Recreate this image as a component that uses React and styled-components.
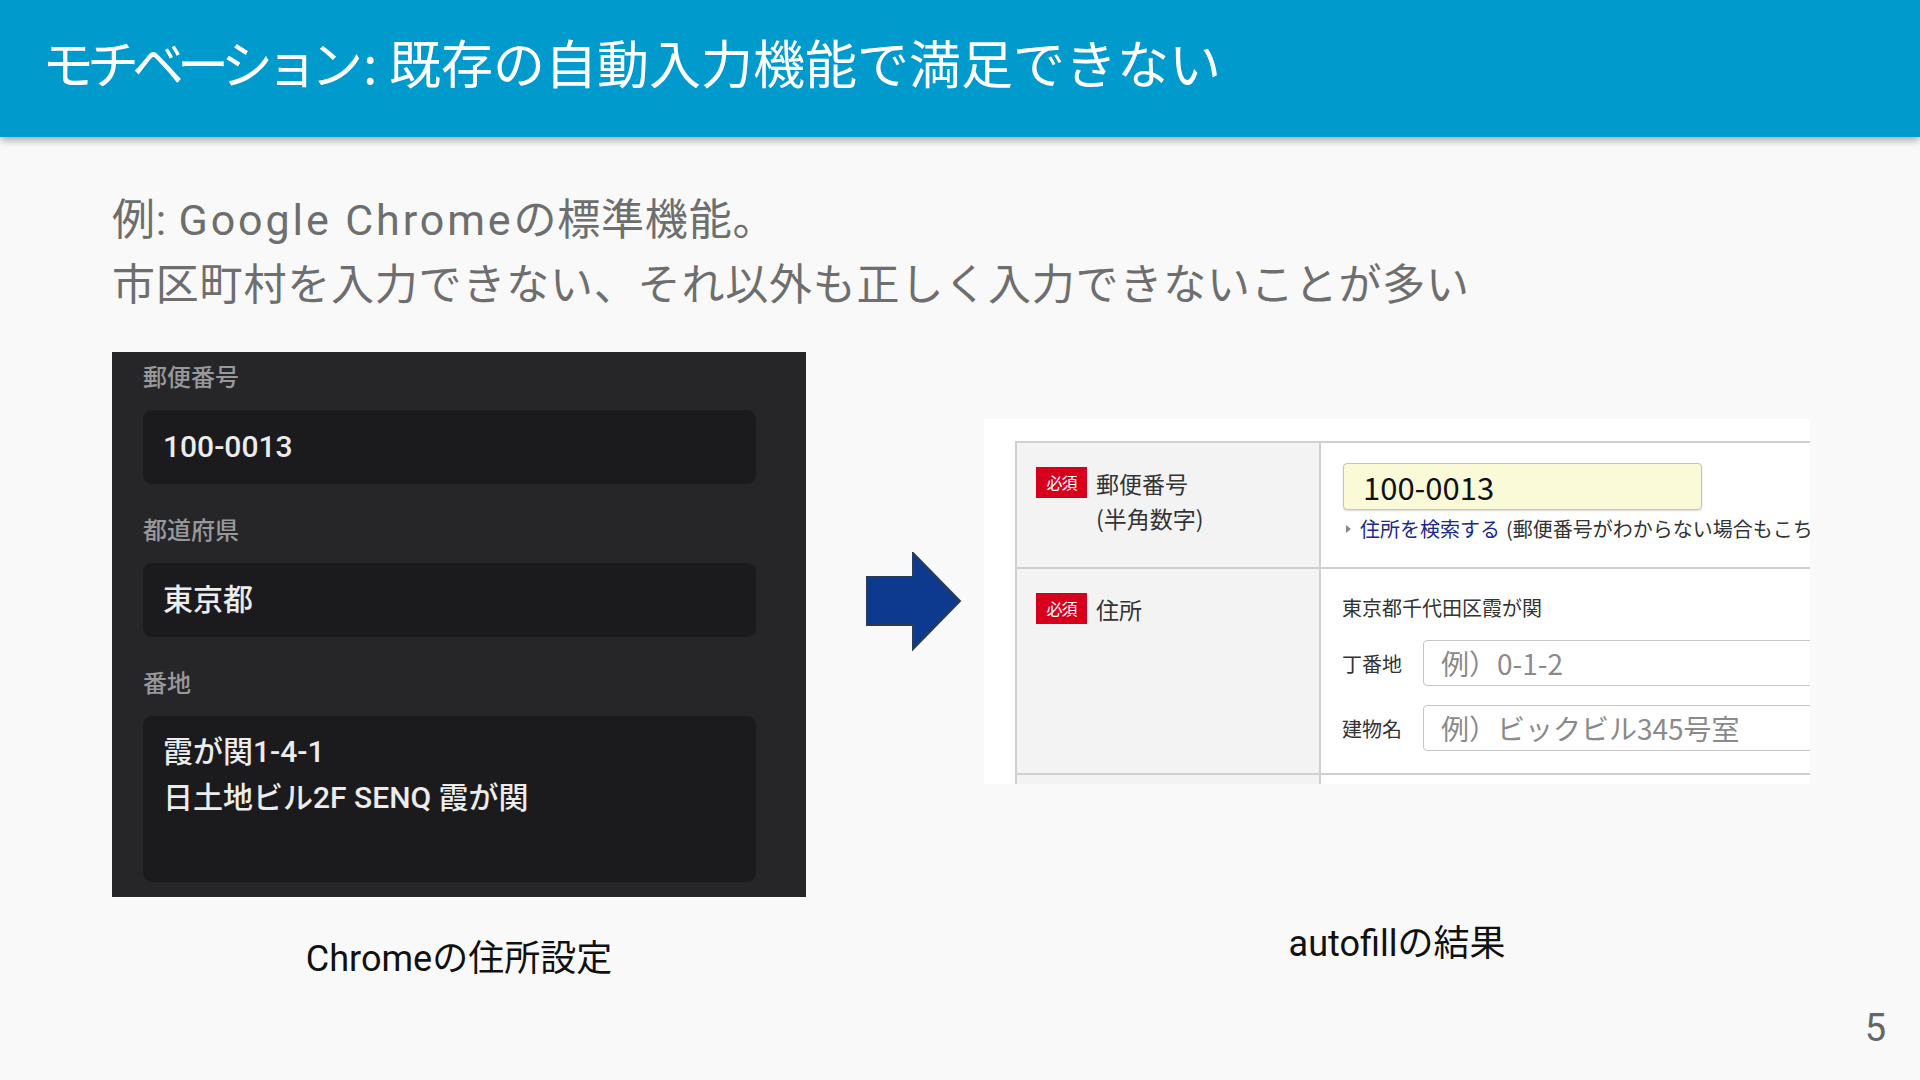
import React from "react";
import styled, { createGlobalStyle } from "styled-components";

const GlobalStyle = createGlobalStyle`
  html, body { margin: 0; padding: 0; }
  body {
    width: 1920px;
    height: 1080px;
    overflow: hidden;
    background: #f9f9f9;
    font-family: Roboto, "Noto Sans CJK JP", "Noto Sans", sans-serif;
  }
`;

const Slide = styled.div`
  position: relative;
  width: 1920px;
  height: 1080px;
  background: #f9f9f9;
  display: flex;
  flex-direction: column;
`;

const Header = styled.header`
  height: 137px;
  box-sizing: border-box;
  background: #009acd;
  box-shadow: 0 3px 8px rgba(0, 0, 0, 0.35);
  padding: 33px 0 0 42px;
  position: relative;
  z-index: 1;
`;

const Title = styled.h1`
  margin: 0;
  font-family: "Noto Sans CJK JP", sans-serif;
  font-weight: 400;
  font-size: 52px;
  line-height: 58px;
  color: #ffffff;
  white-space: nowrap;
`;

const Kana = styled.span`
  letter-spacing: -7px;
  margin-right: 7px;
`;

const Content = styled.main`
  padding: 0 0 0 112px;
  display: flex;
  flex-direction: column;
`;

const Lead = styled.div`
  margin-top: 51px;
  color: #6e6e6e;
  font-family: Roboto, "Noto Sans CJK JP", sans-serif;
  font-size: 43px;
  line-height: 65px;
  letter-spacing: 0.8px;
  white-space: nowrap;
`;

const LeadLatin = styled.span`
  letter-spacing: 2.9px;
`;

const Figures = styled.div`
  margin-top: 34px;
  display: flex;
  align-items: flex-start;
`;

const Figure = styled.figure`
  margin: ${(p) => p.$top || 0}px 0 0 0;
  display: flex;
  flex-direction: column;
  align-items: center;
`;

const Caption = styled.figcaption`
  margin-top: ${(p) => p.$gap}px;
  font-family: Roboto, "Noto Sans CJK JP", sans-serif;
  font-size: 36px;
  line-height: 36px;
  color: #111;
  white-space: nowrap;
`;

/* ---------- Chrome settings panel ---------- */
const DarkPanel = styled.div`
  width: 694px;
  height: 545px;
  box-sizing: border-box;
  background: #262628;
  padding: 12px 50px 0 31px;
  display: flex;
  flex-direction: column;
`;

const FieldGroup = styled.div`
  display: flex;
  flex-direction: column;
  & + & {
    margin-top: 33px;
  }
`;

const DarkLabel = styled.div`
  font-family: Roboto, "Noto Sans CJK JP", sans-serif;
  font-size: 24px;
  font-weight: 500;
  line-height: 28px;
  color: #98989b;
  margin-bottom: 18px;
`;

const DarkInput = styled.div`
  height: ${(p) => p.$h}px;
  box-sizing: border-box;
  background: #1b1b1d;
  border-radius: 9px;
  padding: ${(p) => (p.$multi ? "13px 20px" : "0 20px")};
  display: flex;
  flex-direction: column;
  justify-content: ${(p) => (p.$multi ? "flex-start" : "center")};
  font-family: Roboto, "Noto Sans CJK JP", sans-serif;
  font-size: 30px;
  font-weight: 500;
  line-height: 46px;
  color: #ececec;
  white-space: nowrap;
`;

/* ---------- Arrow ---------- */
const ArrowWrap = styled.div`
  margin: 200px 22px 0 60px;
  width: 96px;
  height: 100px;
`;

/* ---------- Web form screenshot ---------- */
const Shot = styled.div`
  width: 826px;
  height: 365px;
  box-sizing: border-box;
  background: #ffffff;
  overflow: hidden;
  padding: 22px 0 0 31px;
`;

const FormTable = styled.div`
  width: 900px;
  display: grid;
  grid-template-columns: 304px 1fr;
  border-top: 2px solid #cfcfcf;
  border-left: 2px solid #cfcfcf;
  font-family: "Noto Sans CJK JP", sans-serif;
  color: #333;
`;

const LabelCell = styled.div`
  background: #f3f3f3;
  border-right: 2px solid #cfcfcf;
  border-bottom: 2px solid #cfcfcf;
  height: ${(p) => p.$h}px;
  box-sizing: border-box;
  padding: 23px 0 0 19px;
  display: flex;
  align-items: flex-start;
  gap: 9px;
`;

const ValueCell = styled.div`
  border-bottom: 2px solid #cfcfcf;
  height: ${(p) => p.$h}px;
  box-sizing: border-box;
  padding: ${(p) => p.$pad};
  display: flex;
  flex-direction: column;
`;

const Badge = styled.span`
  flex: none;
  width: 51px;
  height: 31px;
  margin-top: 1px;
  background: #d7001c;
  color: #fff;
  font-size: 16px;
  line-height: 31px;
  text-align: center;
  letter-spacing: -1px;
`;

const LabelText = styled.div`
  font-size: 23px;
  line-height: 35px;
  color: #333;
`;

const ZipInput = styled.div`
  width: 359px;
  height: 47px;
  box-sizing: border-box;
  background: #fafad9;
  border: 1px solid #c3c3c3;
  border-radius: 4px;
  box-shadow: 0 1px 2px rgba(0, 0, 0, 0.15);
  padding-left: 19px;
  font-family: "Noto Sans CJK JP", sans-serif;
  font-size: 31px;
  line-height: 45px;
  color: #111;
`;

const HelpLine = styled.div`
  margin-top: 5px;
  font-size: 20px;
  line-height: 28px;
  white-space: nowrap;
  display: flex;
  align-items: center;
  color: #333;
`;

const Tri = styled.span`
  width: 0;
  height: 0;
  border-top: 4px solid transparent;
  border-bottom: 4px solid transparent;
  border-left: 5px solid #888;
  margin: 0 9px 0 3px;
`;

const Link = styled.span`
  color: #1c2a87;
  margin-right: 6px;
`;

const Plain = styled.div`
  font-size: 20px;
  line-height: 28px;
  color: #333;
  white-space: nowrap;
`;

const SubRow = styled.div`
  display: flex;
  align-items: center;
  gap: 21px;
  margin-top: ${(p) => p.$top}px;
`;

const SubLabel = styled.span`
  font-size: 20px;
  color: #333;
  white-space: nowrap;
`;

const PlainInput = styled.div`
  flex: 1;
  height: 46px;
  box-sizing: border-box;
  border: 1px solid #c6c6c6;
  border-radius: 4px;
  padding-left: 17px;
  font-size: 28px;
  line-height: 44px;
  color: #8a8a8a;
  white-space: nowrap;
  background: #fff;
`;

const PageNo = styled.div`
  position: absolute;
  right: 34px;
  bottom: 32px;
  font-family: "Liberation Sans Narrow", Roboto, sans-serif;
  font-size: 38px;
  line-height: 40px;
  color: #666;
`;

function Arrow() {
  return (
    <svg width="96" height="100" viewBox="0 0 96 100">
      <polygon
        points="1,25 47,25 47,1 94,49 47,97 47,73 1,73"
        fill="#0d3a8f"
        stroke="#2b3a55"
        strokeWidth="2"
        strokeLinejoin="miter"
      />
    </svg>
  );
}

export default function App() {
  return (
    <>
      <GlobalStyle />
      <Slide>
        <Header>
          <Title>
            <Kana>モチベーション</Kana>: 既存の自動入力機能で満足できない
          </Title>
        </Header>
        <Content>
          <Lead>
            <div>
              例: <LeadLatin>Google Chrome</LeadLatin>の標準機能。
            </div>
            <div>市区町村を入力できない、それ以外も正しく入力できないことが多い</div>
          </Lead>
          <Figures>
            <Figure>
              <DarkPanel>
                <FieldGroup>
                  <DarkLabel>郵便番号</DarkLabel>
                  <DarkInput $h={74}>100-0013</DarkInput>
                </FieldGroup>
                <FieldGroup>
                  <DarkLabel>都道府県</DarkLabel>
                  <DarkInput $h={74}>東京都</DarkInput>
                </FieldGroup>
                <FieldGroup>
                  <DarkLabel>番地</DarkLabel>
                  <DarkInput $h={166} $multi>
                    <div>霞が関1-4-1</div>
                    <div>日土地ビル2F SENQ 霞が関</div>
                  </DarkInput>
                </FieldGroup>
              </DarkPanel>
              <Caption $gap={44}>Chromeの住所設定</Caption>
            </Figure>
            <ArrowWrap>
              <Arrow />
            </ArrowWrap>
            <Figure $top={67}>
              <Shot>
                <FormTable>
                  <LabelCell $h={126}>
                    <Badge>必須</Badge>
                    <LabelText>
                      郵便番号
                      <br />
                      (半角数字)
                    </LabelText>
                  </LabelCell>
                  <ValueCell $h={126} $pad="20px 0 0 22px">
                    <ZipInput>100-0013</ZipInput>
                    <HelpLine>
                      <Tri />
                      <Link>住所を検索する</Link>
                      (郵便番号がわからない場合もこちら)
                    </HelpLine>
                  </ValueCell>
                  <LabelCell $h={206}>
                    <Badge>必須</Badge>
                    <LabelText>住所</LabelText>
                  </LabelCell>
                  <ValueCell $h={206} $pad="25px 0 0 21px">
                    <Plain>東京都千代田区霞が関</Plain>
                    <SubRow $top={18}>
                      <SubLabel>丁番地</SubLabel>
                      <PlainInput>例）0-1-2</PlainInput>
                    </SubRow>
                    <SubRow $top={19}>
                      <SubLabel>建物名</SubLabel>
                      <PlainInput>例）ビックビル345号室</PlainInput>
                    </SubRow>
                  </ValueCell>
                  <LabelCell $h={40} />
                  <ValueCell $h={40} $pad="0" />
                </FormTable>
              </Shot>
              <Caption $gap={142}>autofillの結果</Caption>
            </Figure>
          </Figures>
        </Content>
        <PageNo>5</PageNo>
      </Slide>
    </>
  );
}
